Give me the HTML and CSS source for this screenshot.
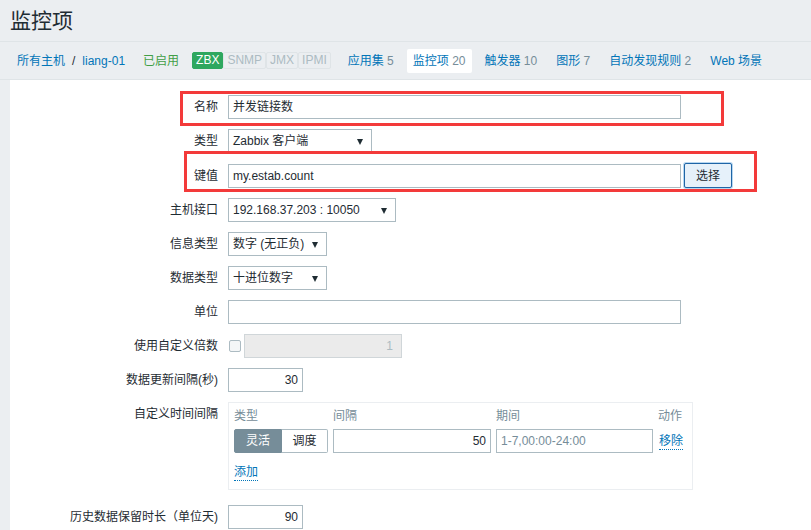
FILE: index.html
```html
<!DOCTYPE html>
<html lang="zh-CN">
<head>
<meta charset="utf-8">
<title>监控项</title>
<link rel="stylesheet" href="styles.css">
</head>
<body>
<header class="page-header">
  <h1 class="page-title">监控项</h1>
</header>
<nav class="subnav">
  <div class="crumbs">
    <a class="link" href="#">所有主机</a>
    <span class="sep">/</span>
    <a class="link" href="#">liang-01</a>
  </div>
  <span class="status-on">已启用</span>
  <div class="badges">
    <span class="badge badge-on">ZBX</span><span class="badge">SNMP</span><span class="badge">JMX</span><span class="badge">IPMI</span>
  </div>
  <a class="tab" href="#">应用集 <span class="count">5</span></a>
  <a class="tab tab-active" href="#">监控项 <span class="count">20</span></a>
  <a class="tab" href="#">触发器 <span class="count">10</span></a>
  <a class="tab" href="#">图形 <span class="count">7</span></a>
  <a class="tab" href="#">自动发现规则 <span class="count">2</span></a>
  <a class="tab" href="#">Web 场景</a>
</nav>
<main class="panel">
  <div class="form">
    <label class="lbl">名称</label>
    <div class="field"><div class="input w-wide">并发链接数</div></div>

    <label class="lbl">类型</label>
    <div class="field"><div class="select w-type">Zabbix 客户端<span class="arrow"></span></div></div>

    <label class="lbl">键值</label>
    <div class="field"><div class="input w-wide">my.estab.count</div><button class="btn">选择</button></div>

    <label class="lbl">主机接口</label>
    <div class="field"><div class="select w-iface">192.168.37.203 : 10050<span class="arrow"></span></div></div>

    <label class="lbl">信息类型</label>
    <div class="field"><div class="select w-small">数字 (无正负)<span class="arrow"></span></div></div>

    <label class="lbl">数据类型</label>
    <div class="field"><div class="select w-small">十进位数字<span class="arrow"></span></div></div>

    <label class="lbl">单位</label>
    <div class="field"><div class="input w-wide"></div></div>

    <label class="lbl">使用自定义倍数</label>
    <div class="field"><span class="checkbox"></span><div class="input disabled w-mult">1</div></div>

    <label class="lbl">数据更新间隔(秒)</label>
    <div class="field"><div class="input num w-num">30</div></div>

    <label class="lbl lbl-top">自定义时间间隔</label>
    <div class="field">
      <div class="intervals">
        <div class="iv-head">类型</div>
        <div class="iv-head">间隔</div>
        <div class="iv-head">期间</div>
        <div class="iv-head">动作</div>
        <div class="seg"><span class="seg-btn seg-active">灵活</span><span class="seg-btn">调度</span></div>
        <div class="input num">50</div>
        <div class="input muted">1-7,00:00-24:00</div>
        <div class="iv-action"><a class="link dotted" href="#">移除</a></div>
        <div class="iv-add"><a class="link dotted" href="#">添加</a></div>
      </div>
    </div>

    <label class="lbl">历史数据保留时长（单位天)</label>
    <div class="field"><div class="input num w-num">90</div></div>
  </div>
</main>
<div class="mark mark-name"></div>
<div class="mark mark-key"></div>
</body>
</html>
```

FILE: styles.css
```css
* { box-sizing: border-box; }

html, body {
  margin: 0;
  padding: 0;
  height: 100%;
  overflow: hidden;
}

body {
  background: #ebeef1;
  color: #1f2c33;
  font-family: "Liberation Sans", "Noto Sans CJK SC", sans-serif;
  font-size: 12px;
  line-height: 14px;
  position: relative;
}

a { text-decoration: none; }

.link { color: #0275b8; }

.page-header {
  height: 42px;
  border-bottom: 1px solid #dfe4e7;
  padding: 0 10px;
}

.page-title {
  margin: 0;
  font-size: 21px;
  font-weight: normal;
  line-height: 42px;
  color: #1f2c33;
}

.subnav {
  height: 38px;
  border-bottom: 1px solid #dfe4e7;
  display: flex;
  align-items: center;
  padding-left: 17px;
}

.crumbs { display: flex; align-items: center; }
.sep { color: #1f2c33; margin: 0 7px 0 7px; }

.status-on {
  color: #429e47;
  margin-left: 18px;
}

.badges {
  display: flex;
  margin-left: 13px;
}

.badge {
  height: 17px;
  line-height: 15px;
  padding: 0 3px;
  border: 1px solid #dfe4e7;
  background: #ebeef1;
  color: #acbbc2;
  border-radius: 2px;
}

.badge-on {
  background: #2ea75f;
  border-color: #2ea75f;
  color: #ffffff;
}

.tab {
  color: #0275b8;
  padding: 5px 6px;
  line-height: 14px;
  margin-left: 7px;
  border-radius: 2px;
}

.badges + .tab { margin-left: 11px; }

.tab .count { color: #768d99; }

.tab-active {
  background: #ffffff;
  color: #0275b8;
}

.panel {
  background: #ffffff;
  margin-left: 10px;
  padding-top: 15px;
  min-height: 460px;
}

.form {
  display: grid;
  grid-template-columns: 208px 1fr;
  column-gap: 10px;
  row-gap: 10px;
}

.lbl {
  text-align: right;
  align-self: center;
  white-space: nowrap;
  line-height: 14px;
}

.lbl-top { align-self: start; margin-top: 5px; }

.field {
  display: flex;
  align-items: center;
  min-height: 24px;
}

.input, .select {
  height: 24px;
  border: 1px solid #acbbc2;
  background: #ffffff;
  padding: 0 4px;
  line-height: 22px;
  color: #1f2c33;
  white-space: nowrap;
  overflow: hidden;
}

.input.num { text-align: right; }
.input.muted { color: #768d99; }

.input.disabled {
  background: #ebebeb;
  border-color: #d0d6d9;
  color: #acbbc2;
  text-align: right;
  padding-right: 8px;
}

.w-wide { width: 453px; }
.w-type { width: 144px; }
.w-iface { width: 168px; }
.w-small { width: 99px; }
.w-mult { width: 158px; }
.w-num { width: 75px; }

.select {
  position: relative;
  padding-right: 20px;
}

.arrow {
  position: absolute;
  right: 8px;
  top: 9px;
  width: 0;
  height: 0;
  border-left: 3.5px solid transparent;
  border-right: 3.5px solid transparent;
  border-top: 6px solid #1f2c33;
}

.btn {
  margin-left: 3px;
  height: 25px;
  width: 48px;
  font: inherit;
  color: #1f2c33;
  background: #e6f1fa;
  border: 1px solid #1f65a6;
  border-radius: 2px;
  box-shadow: 0 0 0 1px #b7d7f0;
  padding: 0;
}

.checkbox {
  width: 12px;
  height: 12px;
  border: 1px solid #acbbc2;
  border-radius: 2px;
  background: #f4f6f7;
  margin-left: 1px;
  margin-right: 3px;
}

.intervals {
  width: 465px;
  height: 88px;
  border: 1px solid #ebeef1;
  padding: 5px 9px 0 5px;
  display: grid;
  grid-template-columns: 94px 158px 157px auto;
  grid-template-rows: 14px 24px 14px;
  column-gap: 5px;
  row-gap: 0;
  margin-bottom: 5px;
}

.iv-head {
  color: #768d99;
  line-height: 14px;
  margin-top: 1px;
}

.iv-head:last-of-type { text-align: right; }

.seg {
  display: flex;
  margin-top: 7px;
  height: 24px;
}

.intervals > .input { margin-top: 7px; }

.seg-btn {
  height: 24px;
  line-height: 22px;
  border: 1px solid #acbbc2;
  background: #ffffff;
  text-align: center;
  width: 46px;
}

.seg-btn:first-child {
  width: 48px;
  border-radius: 2px 0 0 2px;
}

.seg-btn:last-child {
  border-left: none;
  border-radius: 0 2px 2px 0;
}

.seg-active {
  background: #768d99;
  border-color: #768d99;
  color: #ffffff;
}

.iv-action {
  margin-top: 7px;
  line-height: 24px;
  text-align: right;
}

.iv-add {
  grid-column: 1 / span 4;
  margin-top: 19px;
}

.dotted {
  border-bottom: 1px dotted #0275b8;
  padding-bottom: 1px;
}

.mark {
  position: absolute;
  border: 3px solid #f33a3a;
  pointer-events: none;
}

.mark-name { left: 180px; top: 91px; width: 544px; height: 35px; }
.mark-key { left: 184px; top: 151px; width: 573px; height: 41px; }
```
